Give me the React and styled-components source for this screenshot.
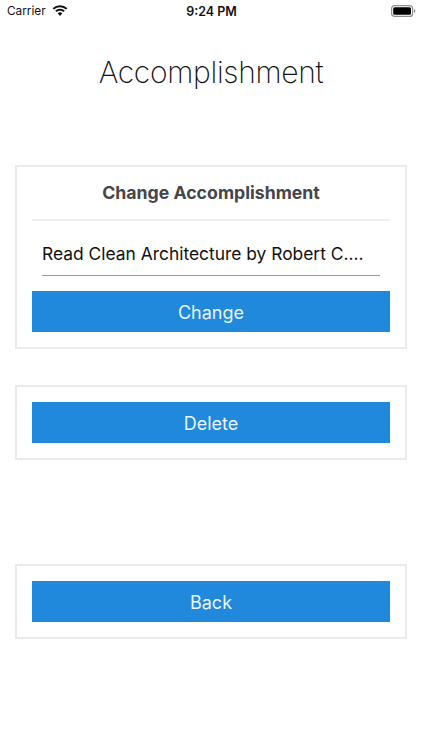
import React from "react";
import styled, { createGlobalStyle } from "styled-components";

const GlobalStyle = createGlobalStyle`
  html, body {
    margin: 0;
    padding: 0;
    background: #fff;
    font-family: Inter, "Liberation Sans", sans-serif;
  }
`;

const Page = styled.div`
  width: 422px;
  height: 750px;
  overflow: hidden;
  display: flex;
  flex-direction: column;
  background: #fff;
`;

const StatusBar = styled.div`
  height: 22px;
  padding: 0 6px 0 7px;
  display: grid;
  grid-template-columns: 1fr auto 1fr;
  align-items: center;
  font-size: 11.8px;
  color: #111;
`;

const StatusLeft = styled.div`
  display: flex;
  align-items: center;
  gap: 6px;
`;

const Clock = styled.div`
  font-weight: 600;
  font-size: 12.5px;
`;

const BatteryWrap = styled.div`
  display: flex;
  justify-content: flex-end;
`;

const Title = styled.h1`
  margin: 31px 0 0;
  text-align: center;
  font-size: 30px;
  line-height: 39px;
  font-weight: 150;
  letter-spacing: -0.3px;
  color: #111;
`;

const Content = styled.div`
  margin: 73px 15px 0;
  width: 392px;
  display: flex;
  flex-direction: column;
`;

const Card = styled.section`
  box-sizing: border-box;
  border: 2px solid #ebebef;
  padding: ${(props) => (props.$compact ? "15px" : "0 15px 15px")};
  margin-top: ${(props) => props.$top || 0}px;
`;

const CardTitle = styled.h2`
  margin: 0;
  height: 52px;
  line-height: 52px;
  text-align: center;
  font-size: 17.7px;
  font-weight: 700;
  color: #45464b;
  border-bottom: 2px solid #efefef;
`;

const Field = styled.div`
  margin: 11px 10px 15px;
  height: 43px;
  line-height: 44px;
  font-size: 17.4px;
  color: #111;
  white-space: nowrap;
  border-bottom: 1px solid #9a9a9a;
`;

const Button = styled.button`
  display: block;
  width: 100%;
  height: 41px;
  border: 0;
  padding: 1px 0 0;
  background: #2089dc;
  color: #e8f4fd;
  font-family: inherit;
  font-size: 18px;
  font-weight: 400;
`;

function Wifi() {
  return (
    <svg width="16" height="12" viewBox="0 0 16 12">
      <path d="M8 2.200c2.300 0 4.400.9 6 2.400l1.400-1.400A10.700 10.700 0 0 0 8 .2 10.700 10.700 0 0 0 .6 3.200L2 4.600a8.700 8.700 0 0 1 6-2.400z" fill="#111" />
      <path d="M8 5.800c1.300 0 2.500.5 3.400 1.300l1.400-1.500A7 7 0 0 0 8 3.700a7 7 0 0 0-4.800 1.900l1.400 1.500c.9-.8 2.100-1.300 3.400-1.300z" fill="#111" />
      <path d="M8 7.300c-.9 0-1.700.3-2.300.9L8 10.900l2.300-2.700c-.6-.6-1.400-.9-2.300-.9z" fill="#111" />
    </svg>
  );
}

function Battery() {
  return (
    <svg width="25" height="12" viewBox="0 0 25 12">
      <rect x="0.600" y="0.600" width="21" height="10.800" rx="3" fill="none" stroke="#8e8e8e" strokeWidth="1.200" />
      <rect x="2.200" y="2.200" width="17.800" height="7.600" rx="1.500" fill="#000" />
      <rect x="23" y="4.200" width="1.200" height="3.600" rx="0.600" fill="#8e8e8e" />
    </svg>
  );
}

export default function App() {
  return (
    <Page>
      <GlobalStyle />
      <StatusBar>
        <StatusLeft>
          <span>Carrier</span>
          <Wifi />
        </StatusLeft>
        <Clock>9:24 PM</Clock>
        <BatteryWrap>
          <Battery />
        </BatteryWrap>
      </StatusBar>
      <Title>Accomplishment</Title>
      <Content>
        <Card>
          <CardTitle>Change Accomplishment</CardTitle>
          <Field>Read Clean Architecture by Robert C....</Field>
          <Button>Change</Button>
        </Card>
        <Card $compact $top={36}>
          <Button>Delete</Button>
        </Card>
        <Card $compact $top={104}>
          <Button>Back</Button>
        </Card>
      </Content>
    </Page>
  );
}
